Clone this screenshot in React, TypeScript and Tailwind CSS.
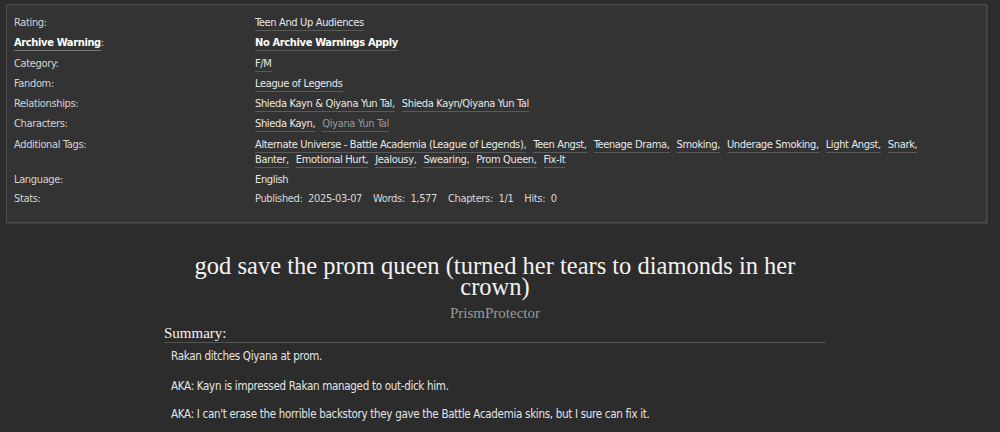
import React from "react";

const sans = { fontFamily: '"Liberation Sans Narrow", "DejaVu Sans Condensed", "Liberation Sans", sans-serif' };
const serif = { fontFamily: '"Liberation Serif", "DejaVu Serif", serif' };

function Tag({ children, last, bold, muted }: { children: React.ReactNode; last?: boolean; bold?: boolean; muted?: boolean }) {
  return (
    <>
      <span className={`border-b border-[#5a5a5a] pb-[1px] whitespace-nowrap ${bold ? "font-bold text-white" : muted ? "text-[#9a9a9a]" : "text-[#e8e8e8]"}`}>
        {children}
        {last ? "" : ","}
      </span>
      {last ? null : <span className="inline-block w-[7px]"> </span>}
    </>
  );
}

function Row({ label, children, bold, mb = "mb-[5.3px]" }: { label: string; children: React.ReactNode; bold?: boolean; mb?: string }) {
  return (
    <div className={`flex ${mb}`}>
      <div className="w-[241px] shrink-0">
        {bold ? (
          <span className="font-bold text-white border-b border-[#777] pb-[1px]">{label}</span>
        ) : (
          <span className="text-[#d4d4d4]">{label}</span>
        )}
        <span className="text-[#d4d4d4]">:</span>
      </div>
      <div className="flex-1 pr-[40px]">{children}</div>
    </div>
  );
}

export default function App() {
  const tags = [
    "Alternate Universe - Battle Academia (League of Legends)",
    "Teen Angst",
    "Teenage Drama",
    "Smoking",
    "Underage Smoking",
    "Light Angst",
    "Snark",
    "Banter",
    "Emotional Hurt",
    "Jealousy",
    "Swearing",
    "Prom Queen",
    "Fix-It",
  ];
  return (
    <div className="w-[1000px] h-[432px] bg-[#2c2c2c] overflow-hidden pt-[4px]">
      <div
        className="ml-[6px] w-[981px] bg-[#333333] border border-[#4d4d4d] shadow-[1px_1px_0_#3d3d3d] pt-[10px] pb-[16px] pl-[7px] text-[11px] tracking-[-0.35px] leading-[15px]"
        style={sans}
      >
        <Row label="Rating">
          <Tag last>Teen And Up Audiences</Tag>
        </Row>
        <Row label="Archive Warning" bold>
          <Tag last bold>No Archive Warnings Apply</Tag>
        </Row>
        <Row label="Category">
          <Tag last>F/M</Tag>
        </Row>
        <Row label="Fandom">
          <Tag last>League of Legends</Tag>
        </Row>
        <Row label="Relationships">
          <Tag>Shieda Kayn &amp; Qiyana Yun Tal</Tag>
          <Tag last>Shieda Kayn/Qiyana Yun Tal</Tag>
        </Row>
        <Row label="Characters">
          <Tag>Shieda Kayn</Tag>
          <Tag last muted>Qiyana Yun Tal</Tag>
        </Row>
        <Row label="Additional Tags">
          {tags.map((t, i) => (
            <Tag key={t} last={i === tags.length - 1}>
              {t}
            </Tag>
          ))}
        </Row>
        <Row label="Language" mb="mb-[4px]">
          <span className="text-[#e8e8e8]">English</span>
        </Row>
        <Row label="Stats" mb="mb-0">
          <span className="text-[#d8d8d8] flex gap-[11px]">
            <span>Published:&nbsp; 2025-03-07</span>
            <span>Words:&nbsp; 1,577</span>
            <span>Chapters:&nbsp; 1/1</span>
            <span>Hits:&nbsp; 0</span>
          </span>
        </Row>
      </div>

      <div className="ml-[164px] w-[662px] mt-[32px]">
        <h2 className="text-center text-[24.5px] leading-[21px] text-[#f2f2f2]" style={serif}>
          god save the prom queen (turned her tears to diamonds in her
          <br />
          crown)
        </h2>
        <div className="text-center text-[15px] leading-[18px] text-[#9a9a9a] mt-[7px]" style={serif}>
          PrismProtector
        </div>
        <div className="mt-[3px] border-b border-[#555] text-[15px] leading-[17px] text-[#f2f2f2]" style={serif}>
          Summary:
        </div>
        <div className="pl-[7px] pt-[6px] text-[11.5px] tracking-[-0.3px] leading-[15px] text-[#e4e4e4]" style={sans}>
          <p>Rakan ditches Qiyana at prom.</p>
          <p className="mt-[15px]">AKA: Kayn is impressed Rakan managed to out-dick him.</p>
          <p className="mt-[13px]">
            AKA: I can&apos;t erase the horrible backstory they gave the Battle Academia skins, but I sure can fix it.
          </p>
        </div>
      </div>
    </div>
  );
}
